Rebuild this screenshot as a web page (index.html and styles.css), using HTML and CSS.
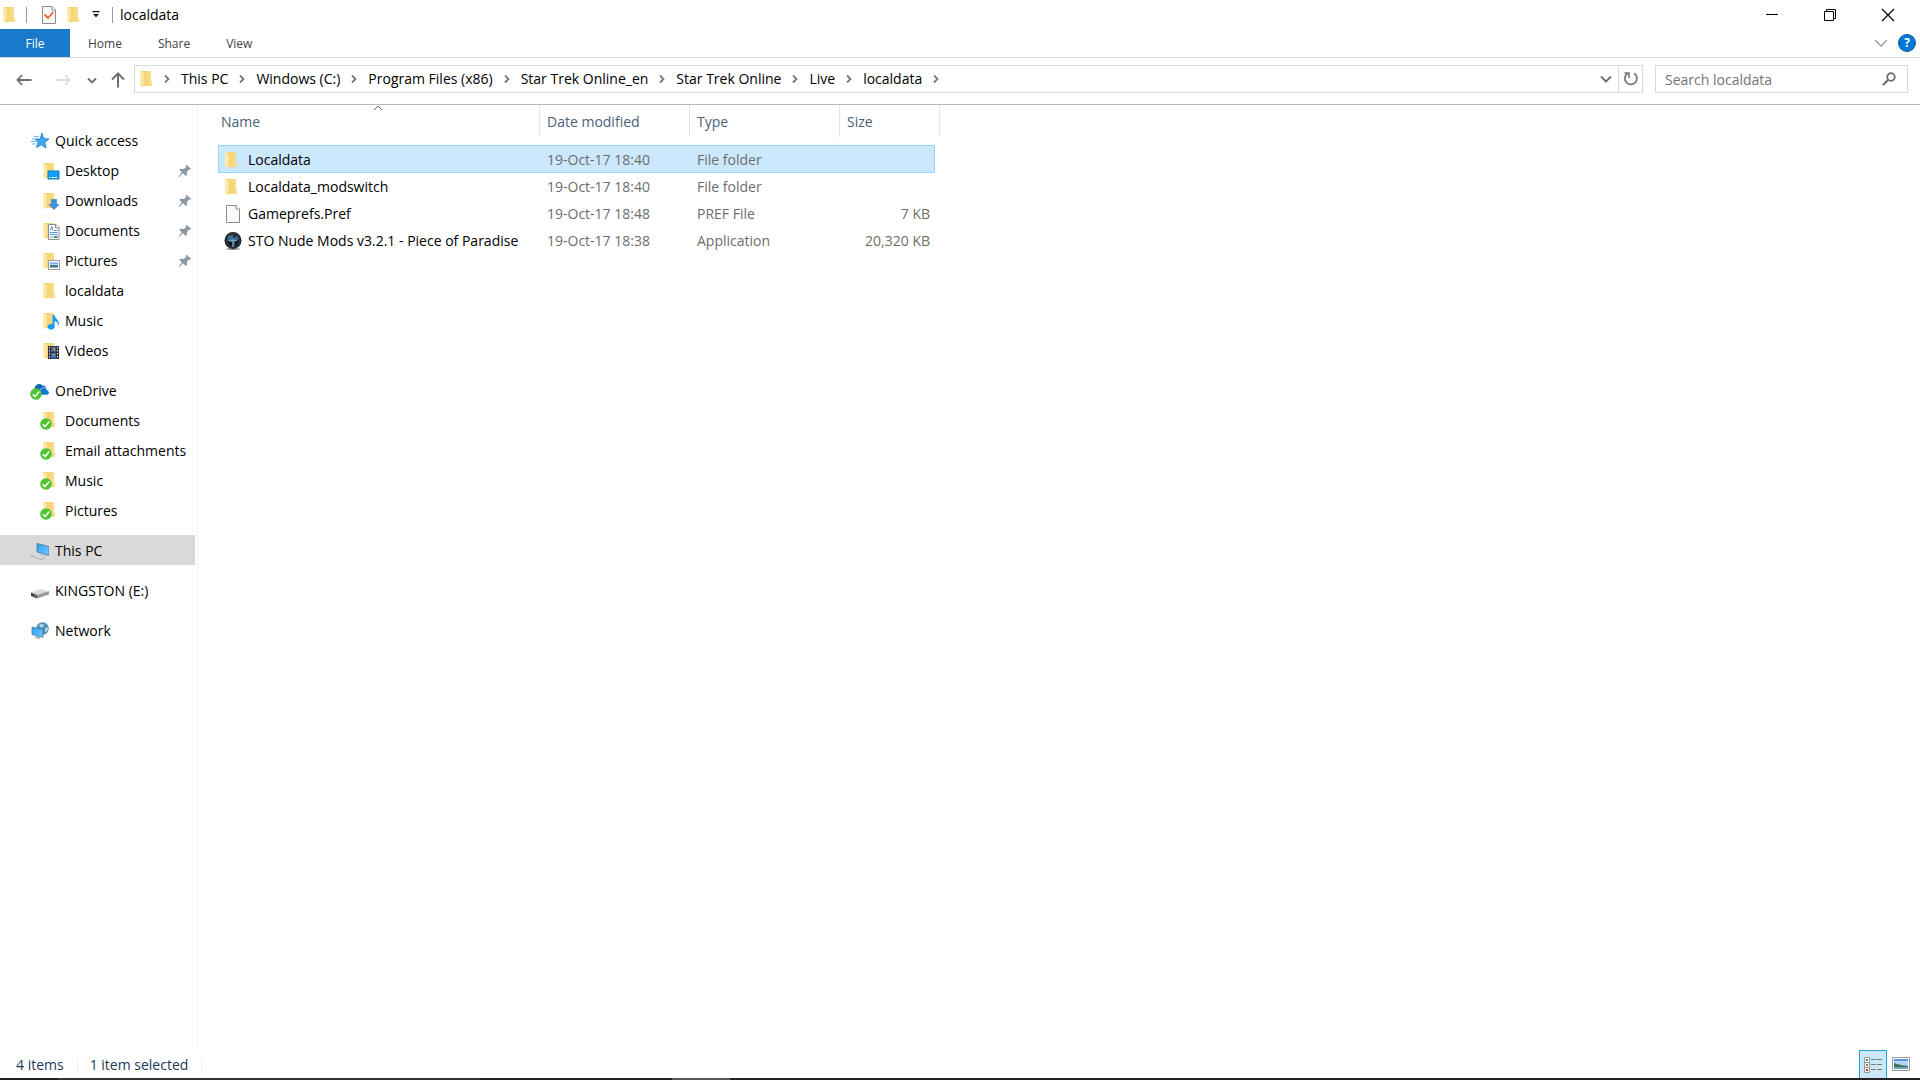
FILE: index.html
```html
<!DOCTYPE html>
<html lang="en">
<head>
    <meta charset="UTF-8">
    <meta name="viewport" content="width=device-width, initial-scale=1.0">
    <title>localdata</title>
    <link rel="stylesheet" href="styles.css">
</head>
<body>
    <!-- Shared icons -->
    <svg class="sprite" aria-hidden="true">
        <defs>
            <linearGradient id="folderBody" x1="0" x2="1"><stop offset="0" stop-color="#f3cd69"/><stop offset="1" stop-color="#fbdf8c"/></linearGradient>
            <linearGradient id="folderFlap" x1="0" x2="1"><stop offset="0" stop-color="#ffeeb5"/><stop offset="1" stop-color="#fbe29b"/></linearGradient>
            <linearGradient id="screen" x1="0" x2="1" y2="1"><stop offset="0" stop-color="#2f9fee"/><stop offset="1" stop-color="#74c8fb"/></linearGradient>
            <linearGradient id="photo" x2="0" y2="1"><stop offset="0" stop-color="#4a8fe8"/><stop offset=".5" stop-color="#d5e8f5"/><stop offset=".55" stop-color="#4d7f70"/><stop offset="1" stop-color="#3b6fa5"/></linearGradient>
        </defs>
        <symbol id="folder" viewBox="0 0 18 18">
            <path d="M2 1H12V11.500L13 12V16H4Z" fill="url(#folderBody)"/>
            <path d="M1 1L5 2.500V13.500L4 14V17.500L1 15.500Z" fill="url(#folderFlap)"/>
        </symbol>
        <symbol id="chevron" viewBox="0 0 8 10">
            <path d="M2 1.500L5.500 5L2 8.500" fill="none" stroke="#7a7a7a" stroke-width="1.800"/>
        </symbol>
        <symbol id="pin" viewBox="0 0 14 14">
            <path d="M8.300 .8L13.200 4.800L12.300 5.800L11 5.500L8.800 8.200L9 11L7.800 12L5 9.200L1 13.200L.6 12.800L3.800 8.300L1.300 5.800L2.500 4.700L5.800 5L8.200 3L7.600 1.700Z" fill="#8b98a3"/>
        </symbol>
        <symbol id="synced" viewBox="0 0 12 12">
            <circle cx="6" cy="6" r="5.800" fill="#4cc52e"/>
            <path d="M2.800 6.300L5 8.600L9.300 3.600" fill="none" stroke="#fff" stroke-width="1.500"/>
        </symbol>
        <symbol id="page" viewBox="0 0 16 18">
            <path d="M1.500 .5H11L14.500 4V17.500H1.500Z" fill="#f8f9f9" stroke="#8c8c8c"/>
            <path d="M11 .5V4H14.500" fill="#fff" stroke="#8c8c8c"/>
        </symbol>
    </svg>

    <header class="title-bar">
        <div class="quick-bar">
            <svg class="icon"><use href="#folder"/></svg>
            <span class="divider"></span>
            <button class="tool" aria-label="Properties">
                <svg class="icon" viewBox="0 0 18 18"><path d="M2.500 .5H12L15.500 4V17.500H2.500Z" fill="#f7f7f7" stroke="#8c8c8c"/><path d="M12 .5V4H15.500" fill="#fff" stroke="#8c8c8c"/><path d="M4.500 8.500L8 12L13.500 6" fill="none" stroke="#f26522" stroke-width="1.800"/></svg>
            </button>
            <button class="tool" aria-label="New folder"><svg class="icon"><use href="#folder"/></svg></button>
            <button class="tool more" aria-label="Customize Quick Access Toolbar">
                <svg width="8" height="7" viewBox="0 0 8 7"><path d="M.5 0H7.500V1.200H.5ZM1 3H7L4 6.200Z" fill="#111"/></svg>
            </button>
            <span class="divider"></span>
            <h1>localdata</h1>
        </div>
        <div class="window-buttons">
            <button aria-label="Minimize"><svg width="14" height="14" viewBox="0 0 14 14"><path d="M1 6.500H13" stroke="#000"/></svg></button>
            <button aria-label="Restore"><svg width="14" height="14" viewBox="0 0 14 14"><path d="M1.500 3.500H10.500V12.500H1.500ZM3.500 3.500V1.500H12.500V10.500H10.500" fill="none" stroke="#000"/></svg></button>
            <button aria-label="Close"><svg width="14" height="14" viewBox="0 0 14 14"><path d="M1 1L13 13M13 1L1 13" stroke="#000" stroke-width="1.200"/></svg></button>
        </div>
    </header>

    <div class="ribbon">
        <button class="tab file-tab">File</button>
        <button class="tab">Home</button>
        <button class="tab">Share</button>
        <button class="tab">View</button>
        <div class="ribbon-end">
            <button aria-label="Expand the Ribbon"><svg width="14" height="8" viewBox="0 0 14 8"><path d="M1 1L7 7L13 1" fill="none" stroke="#9a9a9a" stroke-width="1.300"/></svg></button>
            <button class="help" aria-label="Help">?</button>
        </div>
    </div>

    <div class="address-row">
        <div class="nav-buttons">
            <button aria-label="Back"><svg width="16" height="12" viewBox="0 0 16 12"><path d="M6 1L1.500 6L6 11M1.500 6H15.500" fill="none" stroke="#6e6e6e" stroke-width="1.800"/></svg></button>
            <button aria-label="Forward"><svg width="16" height="12" viewBox="0 0 16 12"><path d="M10 1L14.500 6L10 11M.5 6H14.500" fill="none" stroke="#dcdcdc" stroke-width="1.800"/></svg></button>
            <button class="recent" aria-label="Recent locations"><svg width="10" height="7" viewBox="0 0 10 7"><path d="M1 1.500L5 5.500L9 1.500" fill="none" stroke="#6e6e6e" stroke-width="1.800"/></svg></button>
            <button class="up" aria-label="Up"><svg width="14" height="16" viewBox="0 0 14 16"><path d="M1 7.500L7 1.500L13 7.500M7 1.500V15.500" fill="none" stroke="#6e6e6e" stroke-width="2"/></svg></button>
        </div>
        <div class="address-box">
            <svg class="icon"><use href="#folder"/></svg>
            <nav class="crumbs" aria-label="Path">
                <svg><use href="#chevron"/></svg>
                <a href="#">This PC</a>
                <svg><use href="#chevron"/></svg>
                <a href="#">Windows (C:)</a>
                <svg><use href="#chevron"/></svg>
                <a href="#">Program Files (x86)</a>
                <svg><use href="#chevron"/></svg>
                <a href="#">Star Trek Online_en</a>
                <svg><use href="#chevron"/></svg>
                <a href="#">Star Trek Online</a>
                <svg><use href="#chevron"/></svg>
                <a href="#">Live</a>
                <svg><use href="#chevron"/></svg>
                <a href="#">localdata</a>
                <svg><use href="#chevron"/></svg>
            </nav>
            <button aria-label="Previous locations"><svg width="12" height="8" viewBox="0 0 12 8"><path d="M1 1.500L6 6.500L11 1.500" fill="none" stroke="#6e6e6e" stroke-width="1.800"/></svg></button>
            <button class="refresh" aria-label="Refresh"><svg width="16" height="16" viewBox="0 0 16 16"><path d="M11 2.300A6 6 0 1 1 4.500 2.500" fill="none" stroke="#777" stroke-width="1.800"/><path d="M1.500 2H6V7" fill="none" stroke="#777" stroke-width="1.600"/></svg></button>
        </div>
        <form class="search-box">
            <input type="text" placeholder="Search localdata" aria-label="Search localdata">
            <button type="button" aria-label="Search"><svg width="14" height="14" viewBox="0 0 14 14"><circle cx="9" cy="5" r="3.800" fill="none" stroke="#6e6e6e" stroke-width="1.800"/><path d="M6.200 7.800L1 13" stroke="#6e6e6e" stroke-width="2.200"/></svg></button>
        </form>
    </div>

    <main>
        <nav class="sidebar" aria-label="Folders">
            <ul>
                <li><a href="#">
                    <svg class="icon" viewBox="0 0 18 18"><path d="M11 1L12.800 6.500L18 7L13.800 10.500L15 16L10.200 12.800L5.500 15.500L7 10.500L4 7H9Z" fill="#3daaf0" stroke="#1d7fc8" stroke-width=".8"/><path d="M3 4.500H8M1 7H5M0 9.500H5M1 12H5" stroke="#6fbdf0"/></svg>
                    Quick access</a>
                    <ul>
                        <li><a href="#"><svg class="icon" viewBox="0 0 18 18"><use href="#folder"/><path d="M6 9H17V17H6Z" fill="#12a0ff" stroke="#1678b8"/><path d="M7 15.500H16" stroke="#fff" stroke-dasharray="1 1 6 1"/></svg>Desktop<svg class="pin"><use href="#pin"/></svg></a></li>
                        <li><a href="#"><svg class="icon" viewBox="0 0 18 18"><use href="#folder"/><path d="M9.500 7.500H14.500V12.500H17L12 17.500L7 12.500H9.500Z" fill="#3c8fe0" stroke="#2874bd" stroke-width=".6"/></svg>Downloads<svg class="pin"><use href="#pin"/></svg></a></li>
                        <li><a href="#"><svg class="icon" viewBox="0 0 18 18"><use href="#folder"/><path d="M6.500 2.500H14L17 5.500V17.500H6.500Z" fill="#fff" stroke="#8e8e8e"/><path d="M13.500 2.500V6H17" fill="none" stroke="#8e8e8e"/><path d="M8 8.500L10 4.500L11 8.500M12 8.500H15.500M8 10.500H15.500M8 12.500H15.500M8 15H11" fill="none" stroke="#4a9ad8"/><path d="M12 14H15.500V16H12Z" fill="#3e7f77"/></svg>Documents<svg class="pin"><use href="#pin"/></svg></a></li>
                        <li><a href="#"><svg class="icon" viewBox="0 0 18 18"><use href="#folder"/><path d="M6.500 8.500H17.500V17.500H6.500Z" fill="#fff" stroke="#999"/><path d="M8 10.500H16V15.500H8Z" fill="url(#photo)"/></svg>Pictures<svg class="pin"><use href="#pin"/></svg></a></li>
                        <li><a href="#"><svg class="icon"><use href="#folder"/></svg>localdata</a></li>
                        <li><a href="#"><svg class="icon" viewBox="0 0 18 18"><use href="#folder"/><path d="M10.500 3H12.500C13 7 18 8 16.800 14C16 11 14.500 9.500 12.500 9V15A3.400 2.800 0 1 1 10.500 12.300Z" fill="#109cf0"/></svg>Music</a></li>
                        <li><a href="#"><svg class="icon" viewBox="0 0 18 18"><use href="#folder"/><path d="M6 4H17V17H6Z" fill="#333"/><path d="M9 4.500H14V10H9Z" fill="#375a9e"/><path d="M9 11H14V16.500H9Z" fill="#3866c8"/><path d="M10 7L13 5.500V9ZM9.500 13L12 11.500L13 14Z" fill="#d9a028"/><path d="M7.500 5V17M15.500 5V17" stroke="#ddd" stroke-dasharray="1.500 1.500"/></svg>Videos</a></li>
                    </ul>
                </li>
                <li><a href="#">
                    <svg class="icon onedrive" viewBox="0 0 20 18"><path d="M5 12C1.500 12 1 7.500 4.500 6.500C5 2.500 9.500 .5 12.500 3.500C15 3 16.500 5 16 7L13 6.500L7 12Z" fill="#1565b5"/><path d="M9 13C6.500 9.500 9.500 7 11 7.500C12 4.500 16 4.500 17 8C19.800 8.500 19.800 13 17 13Z" fill="#0f78d4" stroke="#fff" stroke-width=".6"/><use href="#synced" x="0" y="6" width="12" height="12"/></svg>
                    OneDrive</a>
                    <ul>
                        <li><a href="#"><svg class="icon synced" viewBox="0 0 20 20"><use href="#folder" x="2" y="0" width="18" height="18"/><use href="#synced" x="0" y="7" width="12" height="12"/></svg>Documents</a></li>
                        <li><a href="#"><svg class="icon synced" viewBox="0 0 20 20"><use href="#folder" x="2" y="0" width="18" height="18"/><use href="#synced" x="0" y="7" width="12" height="12"/></svg>Email attachments</a></li>
                        <li><a href="#"><svg class="icon synced" viewBox="0 0 20 20"><use href="#folder" x="2" y="0" width="18" height="18"/><use href="#synced" x="0" y="7" width="12" height="12"/></svg>Music</a></li>
                        <li><a href="#"><svg class="icon synced" viewBox="0 0 20 20"><use href="#folder" x="2" y="0" width="18" height="18"/><use href="#synced" x="0" y="7" width="12" height="12"/></svg>Pictures</a></li>
                    </ul>
                </li>
                <li><a href="#" class="active">
                    <svg class="icon" viewBox="0 0 18 18"><path d="M6 1.500L18 4.500V13.500L6 10Z" fill="url(#screen)" stroke="#3b7196" stroke-width=".7"/><path d="M10 11.500L9 13.500L14 14.500V12.500" fill="#b9c4cc"/><path d="M0 13.500L10 17.500L14 15.500M0 14.500L2 13.500" fill="none" stroke="#a7b0b6"/></svg>
                    This PC</a></li>
                <li><a href="#">
                    <svg class="icon" viewBox="0 0 18 18"><path d="M0 10.500L9 7L18 9L6 13Z" fill="#dcdcdc"/><path d="M0 10.500L6 13V16.500L0 14Z" fill="#3c4446"/><path d="M6 13L18 9V12.500L6 16.500Z" fill="#9b9b9b"/><path d="M3 13.500L5 14.500" stroke="#59d45b"/></svg>
                    KINGSTON (E:)</a></li>
                <li><a href="#">
                    <svg class="icon" viewBox="0 0 18 18"><circle cx="11.500" cy="6.500" r="6.300" fill="#4f8fb5"/><path d="M8 3C10 1 14 2 13 4L10 6ZM14 6L17.500 5L16.500 9L14 10Z" fill="#a9d4ea"/><path d="M1 5L12 7.500V15.500L1 12.500Z" fill="url(#screen)" stroke="#3376a3" stroke-width=".7"/><path d="M5 14L9 15V17L4 16Z" fill="#aab4ba"/></svg>
                    Network</a></li>
            </ul>
        </nav>

        <section class="content">
            <table class="file-list">
                <colgroup>
                    <col class="col-name"><col class="col-date"><col class="col-type"><col class="col-size"><col class="col-end">
                </colgroup>
                <thead>
                    <tr>
                        <th class="sorted" aria-sort="ascending"><button>Name</button><svg class="sort-arrow" viewBox="0 0 10 6"><path d="M1 5L5 1L9 5" fill="none" stroke="#666"/></svg></th>
                        <th><button>Date modified</button></th>
                        <th><button>Type</button></th>
                        <th colspan="2"><button>Size</button></th>
                    </tr>
                </thead>
                <tbody>
                    <tr class="selected">
                        <td><div class="file-name"><svg class="icon"><use href="#folder"/></svg>Localdata</div></td>
                        <td>19-Oct-17 18:40</td>
                        <td>File folder</td>
                        <td></td>
                    </tr>
                    <tr>
                        <td><div class="file-name"><svg class="icon"><use href="#folder"/></svg>Localdata_modswitch</div></td>
                        <td>19-Oct-17 18:40</td>
                        <td>File folder</td>
                        <td></td>
                    </tr>
                    <tr>
                        <td><div class="file-name"><svg class="icon"><use href="#page"/></svg>Gameprefs.Pref</div></td>
                        <td>19-Oct-17 18:48</td>
                        <td>PREF File</td>
                        <td>7 KB</td>
                    </tr>
                    <tr>
                        <td><div class="file-name"><svg class="icon" viewBox="0 0 18 18"><ellipse cx="9" cy="17" rx="7" ry="1" fill="#999"/><circle cx="9" cy="8.500" r="8.500" fill="#20242a"/><circle cx="9" cy="8.500" r="6.500" fill="#10151d" stroke="#454b54" stroke-width=".8"/><path d="M4 4L8 3L9 7L13 3L14.500 8L11 9.500L10.500 15L8 15L8 10L3.500 9Z" fill="#3d6c98"/><path d="M9 3V14M5 8.500H13" stroke="#8fb3cc" stroke-width=".7"/></svg>STO Nude Mods v3.2.1 - Piece of Paradise</div></td>
                        <td>19-Oct-17 18:38</td>
                        <td>Application</td>
                        <td>20,320 KB</td>
                    </tr>
                </tbody>
            </table>
        </section>
    </main>

    <footer class="status-bar">
        <span class="status">4 items</span>
        <span class="status">1 item selected</span>
        <div class="view-buttons">
            <button class="current" aria-label="Details view">
                <svg width="20" height="18" viewBox="0 0 20 18"><path d="M1.500 1.500H6.500V6.500H1.500ZM1.500 6.500H6.500V11.500H1.500ZM1.500 11.500H6.500V16.500H1.500Z" fill="#fff" stroke="#999"/><path d="M3 3H5V5H3Z" fill="#3d8fa8"/><path d="M3 8H5V10H3Z" fill="#8c8a28"/><path d="M3 13H5V15H3Z" fill="#c8322a"/><path d="M8 3.500H13M14 3.500H19M8 8.500H13M14 8.500H19M8 13.500H13M14 13.500H19" stroke="#777"/></svg>
            </button>
            <button aria-label="Large icons view">
                <svg width="18" height="14" viewBox="0 0 18 14"><path d="M.5 .5H17.500V13.500H.5Z" fill="#fff" stroke="#999"/><path d="M2 2H16V12H2Z" fill="#b5d6f8"/><path d="M2 2H16V4H2Z" fill="#5795e8"/><path d="M2 6L9 8L16 9V10H2Z" fill="#3f7560"/><path d="M2 10H16V12H2Z" fill="#6aa5b8"/></svg>
            </button>
        </div>
    </footer>
    <div class="taskbar"></div>
</body>
</html>
```
FILE: styles.css
```css
:root {
    --text-color: #000;
    --muted-color: #6d6d6d;
    --header-color: #4c607a;
    --line-color: #d9d9d9;
    --file-blue: #1979ca;
    --select-fill: #cce8ff;
    --select-line: #99d1ff;
}

* {
    box-sizing: border-box;
}

body {
    margin: 0;
    height: 100vh;
    display: flex;
    flex-direction: column;
    font-family: "Open Sans", "Noto Sans", sans-serif;
    font-size: 14px;
    line-height: 20px;
    color: var(--text-color);
    background: #fff;
    overflow: hidden;
}

button {
    display: flex;
    align-items: center;
    justify-content: center;
    padding: 0;
    border: none;
    background: none;
    font: inherit;
    color: inherit;
}

a {
    color: inherit;
    text-decoration: none;
}

svg {
    flex: none;
    display: block;
}

.sprite {
    position: absolute;
    width: 0;
    height: 0;
}

.icon {
    width: 18px;
    height: 18px;
}

/* Title bar */
.title-bar {
    display: flex;
    justify-content: space-between;
    height: 29px;
}

.quick-bar {
    display: flex;
    align-items: center;
    padding-left: 2px;
}

.divider {
    width: 1px;
    height: 16px;
    margin: 0 7px 0 6px;
    background: #9a9a9a;
}

.tool {
    width: 26px;
    padding-left: 4px;
}

.quick-bar .more {
    width: 20px;
    padding-left: 0;
}

.title-bar h1 {
    margin: 0;
    font-size: 14px;
    font-weight: normal;
}

.window-buttons {
    display: flex;
    padding-right: 3px;
}

.window-buttons button {
    width: 58px;
}

/* Ribbon */
.ribbon {
    display: flex;
    height: 29px;
    border-bottom: 1px solid var(--line-color);
}

.tab {
    padding: 1px 18px 0;
    font-size: 12px;
    color: #444;
}

.file-tab {
    width: 70px;
    background: var(--file-blue);
    color: #fff;
}

.ribbon-end {
    display: flex;
    align-items: center;
    gap: 10px;
    margin-left: auto;
    padding-right: 4px;
}

.help {
    width: 18px;
    height: 18px;
    border: 1px solid #0c5ea8;
    border-radius: 50%;
    background: #0078d7;
    color: #fff;
    font-size: 12px;
    font-weight: bold;
}

/* Address row */
.address-row {
    display: flex;
    align-items: center;
    height: 47px;
    padding: 0 12px 4px 0;
    border-bottom: 1px solid #b9b9b9;
}

.nav-buttons {
    display: flex;
    align-items: center;
    width: 134px;
    padding: 2px 0 0 4px;
}

.nav-buttons button {
    width: 39px;
    height: 28px;
}

.nav-buttons .recent {
    width: 20px;
}

.nav-buttons .up {
    width: 32px;
}

.address-box {
    flex: 1;
    display: flex;
    align-items: center;
    height: 28px;
    margin-right: 12px;
    padding-left: 4px;
    border: 1px solid var(--line-color);
}

.address-box button {
    width: 24px;
    height: 26px;
}

.address-box .refresh {
    border-left: 1px solid var(--line-color);
}

.crumbs {
    flex: 1;
    display: flex;
    align-items: center;
    gap: 10px;
    padding-left: 6px;
}

.crumbs svg {
    width: 8px;
    height: 10px;
}

.search-box {
    display: flex;
    align-items: center;
    width: 253px;
    height: 28px;
    border: 1px solid var(--line-color);
}

.search-box input {
    flex: 1;
    min-width: 0;
    padding: 1px 0 0 9px;
    border: none;
    outline: none;
    font: inherit;
}

.search-box input::placeholder {
    color: #757575;
}

.search-box button {
    width: 36px;
    height: 26px;
}

/* Main area */
main {
    flex: 1;
    display: flex;
    min-height: 0;
}

.sidebar {
    width: 198px;
    padding: 20px 2px 0 0;
    border-right: 1px solid #f3f3f3;
}

.sidebar ul {
    margin: 0;
    padding: 0;
    list-style: none;
}

.sidebar > ul > li {
    margin-bottom: 10px;
}

.sidebar a {
    display: flex;
    align-items: center;
    gap: 6px;
    height: 30px;
    padding: 1px 0 0 31px;
    white-space: nowrap;
}

.sidebar ul ul a {
    padding-left: 42px;
    gap: 5px;
}

.sidebar ul ul .synced {
    width: 20px;
    height: 20px;
    margin-left: -2px;
}

.sidebar .onedrive {
    width: 20px;
    margin: 0 -1px;
}

.sidebar .active {
    background: #d9d9d9;
}

.sidebar .pin {
    width: 14px;
    height: 14px;
    margin-left: auto;
    margin-right: 3px;
}

.content {
    flex: 1;
    padding-left: 20px;
}

.file-list {
    table-layout: fixed;
    width: 722px;
    border-collapse: separate;
    border-spacing: 0;
}

.col-name {
    width: 322px;
}

.col-date,
.col-type {
    width: 150px;
}

.col-size {
    width: 95px;
}

.col-end {
    width: 5px;
}

/* column lines stop short of the rows */
.file-list th {
    height: 40px;
    padding: 7px 7px 13px;
    background: linear-gradient(#e5e5e5, #e5e5e5) right top / 1px 32px no-repeat;
    color: var(--header-color);
    font-weight: normal;
    text-align: left;
}

.file-list .sorted {
    position: relative;
    padding-left: 3px;
}

.sort-arrow {
    position: absolute;
    top: 0;
    left: 48%;
    width: 10px;
    height: 6px;
}

.file-list td {
    height: 27px;
    padding: 0 7px;
    border: 1px solid transparent;
    border-width: 1px 0;
    color: var(--muted-color);
}

.file-list td:first-child {
    padding-left: 5px;
    border-left-width: 1px;
    color: var(--text-color);
}

.file-list td:last-child {
    padding-right: 4px;
    border-right-width: 1px;
    text-align: right;
}

.file-list .selected td {
    height: 28px;
    padding-top: 1px;
    background: var(--select-fill);
    border-color: var(--select-line);
}

.file-name {
    display: flex;
    align-items: center;
    gap: 6px;
    white-space: nowrap;
}

/* Status bar */
.status-bar {
    display: flex;
    align-items: center;
    height: 28px;
    padding-left: 4px;
    color: #1e395b;
}

.status {
    padding: 1px 13px 0 12px;
    border-right: 1px solid #f0f0f0;
    line-height: 14px;
}

.view-buttons {
    display: flex;
    margin-left: auto;
    padding-right: 5px;
}

.view-buttons button {
    width: 28px;
    height: 28px;
}

.view-buttons .current {
    border: 1px solid #26a0da;
    border-bottom: none;
    background: #cbe8f6;
}

.taskbar {
    height: 2px;
    background: linear-gradient(to right, #1f1f1f 3%, #333 3% 25%, #222 25% 35%, #555 35% 38%, #222 38%);
}
```
